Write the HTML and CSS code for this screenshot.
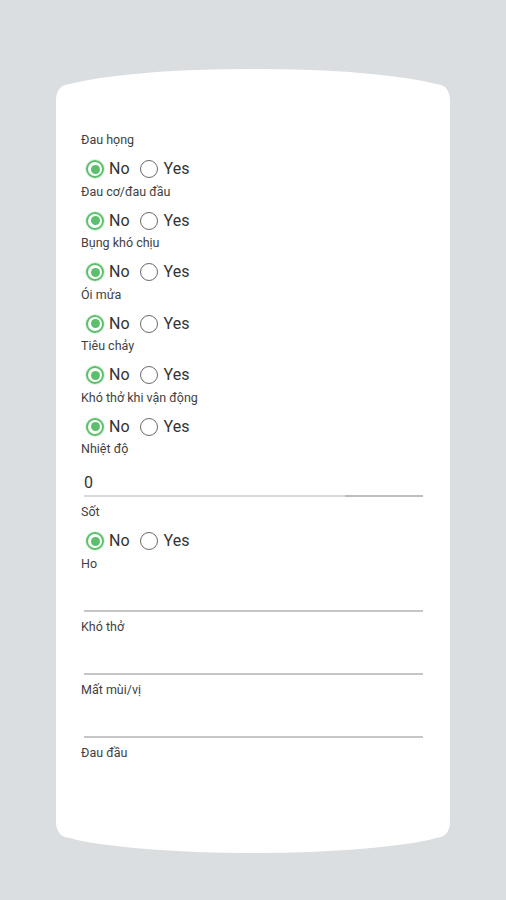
FILE: index.html
```html
<!DOCTYPE html>
<html lang="vi">
<head>
<meta charset="utf-8">
<title>Form</title>
<link rel="stylesheet" href="styles.css">
</head>
<body>
<div class="card">
  <div class="group">
    <div class="label">Đau họng</div>
    <div class="radios"><span class="radio"><span class="dot on"></span>No</span><span class="radio"><span class="dot"></span>Yes</span></div>
  </div>
  <div class="group">
    <div class="label">Đau cơ/đau đầu</div>
    <div class="radios"><span class="radio"><span class="dot on"></span>No</span><span class="radio"><span class="dot"></span>Yes</span></div>
  </div>
  <div class="group">
    <div class="label">Bụng khó chịu</div>
    <div class="radios"><span class="radio"><span class="dot on"></span>No</span><span class="radio"><span class="dot"></span>Yes</span></div>
  </div>
  <div class="group">
    <div class="label">Ói mửa</div>
    <div class="radios"><span class="radio"><span class="dot on"></span>No</span><span class="radio"><span class="dot"></span>Yes</span></div>
  </div>
  <div class="group">
    <div class="label">Tiêu chảy</div>
    <div class="radios"><span class="radio"><span class="dot on"></span>No</span><span class="radio"><span class="dot"></span>Yes</span></div>
  </div>
  <div class="group">
    <div class="label">Khó thở khi vận động</div>
    <div class="radios"><span class="radio"><span class="dot on"></span>No</span><span class="radio"><span class="dot"></span>Yes</span></div>
  </div>
  <div class="group">
    <div class="label">Nhiệt độ</div>
    <div class="input temp">0</div>
  </div>
  <div class="group">
    <div class="label">Sốt</div>
    <div class="radios"><span class="radio"><span class="dot on"></span>No</span><span class="radio"><span class="dot"></span>Yes</span></div>
  </div>
  <div class="group">
    <div class="label">Ho</div>
    <div class="input"></div>
  </div>
  <div class="group">
    <div class="label">Khó thở</div>
    <div class="input"></div>
  </div>
  <div class="group">
    <div class="label">Mất mùi/vị</div>
    <div class="input"></div>
  </div>
  <div class="group">
    <div class="label">Đau đầu</div>
  </div>
</div>
</body>
</html>
```

FILE: styles.css
```css
html, body {
  margin: 0;
  padding: 0;
}
body {
  width: 506px;
  height: 900px;
  background: #dbdee0;
  font-family: Roboto, "Noto Sans", "DejaVu Sans", sans-serif;
  overflow: hidden;
  padding-top: 69px;
  box-sizing: border-box;
}
.card {
  margin-left: 56px;
  width: 394px;
  height: 784px;
  box-sizing: border-box;
  background: #ffffff;
  padding: 63px 27px 0 25px;
  clip-path: path("M0,32 Q0,16 14,15 A200,25 0 0 1 380,15 Q394,16 394,32 L394,752 Q394,768 380,769 A200,25 0 0 1 14,769 Q0,768 0,752 Z");
  display: flex;
  flex-direction: column;
}
.label {
  font-size: 12.5px;
  line-height: 16px;
  height: 16px;
  color: #414141;
}
.radios {
  display: flex;
  align-items: center;
  gap: 10px;
  padding: 11px 0 4.5px 5px;
  height: 20px;
}
.radio {
  display: flex;
  align-items: center;
  gap: 5px;
  font-size: 16px;
  line-height: 20px;
  color: #333333;
}
.radio + .radio {
  gap: 6px;
}
.dot {
  width: 18px;
  height: 18px;
  box-sizing: border-box;
  border-radius: 50%;
  border: 1.6px solid #6a6a6a;
  display: grid;
  place-items: center;
}
.dot.on {
  border: 2px solid #5cbf6c;
  box-shadow: 0 0 0 1px rgba(92, 191, 108, 0.22);
}
.dot.on::after {
  content: "";
  width: 9px;
  height: 9px;
  border-radius: 50%;
  background: #5cbf6c;
}
.input {
  margin-left: 3px;
  height: 16px;
  padding: 18px 0 4px 0;
  font-size: 16px;
  line-height: 16px;
  color: #333333;
  border-bottom: 2px solid #c6c6c6;
  margin-bottom: 7px;
}
.input.temp {
  border-bottom: none;
  background: linear-gradient(to right, #d9d9d9 0, #d9d9d9 77%, #bdbdbd 77%) no-repeat left bottom / 100% 2px;
  padding-bottom: 6px;
  margin-bottom: 7px;
}
```
